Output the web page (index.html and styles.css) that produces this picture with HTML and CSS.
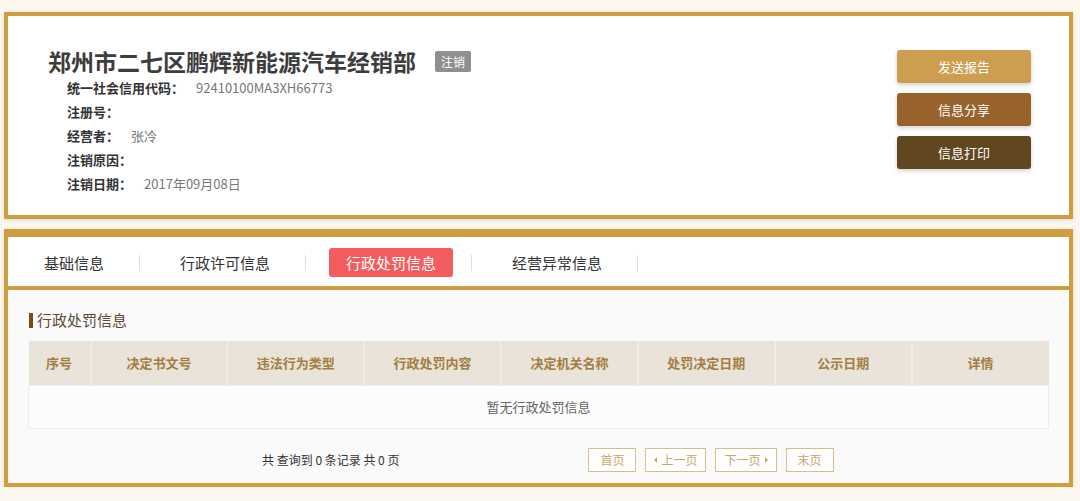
FILE: index.html
```
<!DOCTYPE html>
<html lang="zh-CN">
<head>
    <meta charset="UTF-8">
    <meta name="viewport" content="width=device-width, initial-scale=1.0">
    <title>郑州市二七区鹏辉新能源汽车经销部</title>
    <link rel="stylesheet" href="styles.css">
</head>
<body>
    <div class="page">
        <div class="card company-card">
            <div class="company-info">
                <h1 class="company-name">郑州市二七区鹏辉新能源汽车经销部 <span class="status-badge">注销</span></h1>
                <ul class="info-list">
                    <li><span class="info-label">统一社会信用代码：</span><span class="info-value">92410100MA3XH66773</span></li>
                    <li><span class="info-label">注册号：</span><span class="info-value"></span></li>
                    <li><span class="info-label">经营者：</span><span class="info-value">张冷</span></li>
                    <li><span class="info-label">注销原因：</span><span class="info-value"></span></li>
                    <li><span class="info-label">注销日期：</span><span class="info-value">2017年09月08日</span></li>
                </ul>
            </div>
            <div class="actions">
                <button class="btn btn-report">发送报告</button>
                <button class="btn btn-share">信息分享</button>
                <button class="btn btn-print">信息打印</button>
            </div>
        </div>

        <div class="card detail-card">
            <ul class="tabs">
                <li class="tab-item"><a href="#">基础信息</a></li>
                <li class="tab-item"><a href="#">行政许可信息</a></li>
                <li class="tab-item active"><a href="#">行政处罚信息</a></li>
                <li class="tab-item"><a href="#">经营异常信息</a></li>
            </ul>

            <div class="tab-content">
                <h2 class="section-title">行政处罚信息</h2>
                <table class="data-table">
                    <thead>
                        <tr>
                            <th class="col-no">序号</th>
                            <th>决定书文号</th>
                            <th>违法行为类型</th>
                            <th>行政处罚内容</th>
                            <th>决定机关名称</th>
                            <th>处罚决定日期</th>
                            <th>公示日期</th>
                            <th>详情</th>
                        </tr>
                    </thead>
                    <tbody>
                        <tr>
                            <td colspan="8" class="empty">暂无行政处罚信息</td>
                        </tr>
                    </tbody>
                </table>

                <div class="table-footer">
                    <span class="page-info">共 查询到 0 条记录 共 0 页</span>
                    <div class="pager">
                        <a href="#" class="page-btn">首页</a>
                        <a href="#" class="page-btn prev">上一页</a>
                        <a href="#" class="page-btn next">下一页</a>
                        <a href="#" class="page-btn">末页</a>
                    </div>
                </div>
            </div>
        </div>
    </div>
</body>
</html>
```
FILE: styles.css
```
:root {
    --gold: #cf9d3d;
    --gold-light: #d8bd88;
    --text-color: #3b3b3b;
    --text-secondary: #777777;
    --bg-color: #fcf8ef;
}

* {
    box-sizing: border-box;
    margin: 0;
    padding: 0;
}

body {
    font-family: "Noto Sans CJK SC", "Liberation Sans", sans-serif;
    color: var(--text-color);
    background-color: var(--bg-color);
}

ul {
    list-style: none;
}

a {
    text-decoration: none;
}

.page {
    padding: 12px 7px 0 4px;
    display: flex;
    flex-direction: column;
    gap: 10px;
}

.card {
    background-color: #ffffff;
    border: 4px solid var(--gold);
    box-shadow: 0 1px 5px rgba(0, 0, 0, 0.12);
}

/* company card */

.company-card {
    display: flex;
    justify-content: space-between;
    align-items: flex-start;
    padding: 31px 38px 19px 40px;
}

.company-name {
    display: flex;
    align-items: center;
    font-size: 23px;
    line-height: 29px;
    font-weight: bold;
    color: #3d3d3d;
}

.status-badge {
    margin-left: 19px;
    width: 36px;
    height: 21px;
    line-height: 21px;
    text-align: center;
    font-size: 12px;
    font-weight: normal;
    color: #ffffff;
    background-color: #8f8f8f;
    border-radius: 2px;
}

.info-list {
    padding-left: 19px;
}

.info-list li {
    font-size: 13px;
    line-height: 24px;
    height: 24px;
}

.info-label {
    font-weight: bold;
    color: #333333;
}

.info-value {
    margin-left: 12px;
    color: var(--text-secondary);
}

.actions {
    margin-top: 3px;
    display: flex;
    flex-direction: column;
    gap: 10px;
}

.btn {
    width: 134px;
    height: 33px;
    border: none;
    border-radius: 3px;
    font-family: inherit;
    font-size: 13px;
    color: #ffffff;
    cursor: pointer;
    box-shadow: 0 2px 4px rgba(0, 0, 0, 0.18);
}

.btn-report {
    background-color: #cd9e4f;
}

.btn-share {
    background-color: #98632a;
}

.btn-print {
    background-color: #614720;
}

/* detail card */

.detail-card {
    border-top-width: 8px;
}

.tabs {
    display: flex;
    align-items: center;
    height: 53px;
    padding-top: 2px;
    border-bottom: 4px solid var(--gold);
}

.tab-item {
    display: flex;
    align-items: center;
    padding-left: 19px;
}

.tab-item + .tab-item {
    padding-left: 23px;
}

.tab-item::after {
    content: "";
    width: 1px;
    height: 16px;
    margin-left: 18px;
    background-color: #dddddd;
}

.tab-item a {
    display: block;
    height: 29px;
    line-height: 29px;
    padding: 0 17px;
    font-size: 15px;
    color: #333333;
    border-radius: 3px;
}

.tab-item.active a {
    color: #ffffff;
    background-color: #f25c5f;
}

.tab-content {
    background-color: #fafafa;
    padding: 20px 20px 11px 20px;
}

.section-title {
    display: flex;
    align-items: center;
    gap: 4px;
    font-size: 15px;
    line-height: 20px;
    font-weight: normal;
    color: #5a4a38;
    margin-bottom: 11px;
}

.section-title::before {
    content: "";
    width: 4px;
    height: 15px;
    margin-left: 1px;
    background-color: #7b4c12;
}

.data-table {
    width: 100%;
    border-collapse: collapse;
    table-layout: fixed;
}

.data-table th {
    height: 44px;
    font-size: 13px;
    font-weight: bold;
    color: #a27e40;
    background-color: #e9e3d9;
    border-left: 2px solid #f1ece4;
}

.data-table th:first-child {
    border-left: none;
}

.data-table .col-no {
    width: 62px;
}

.data-table td {
    height: 43px;
    font-size: 13px;
    text-align: center;
    color: #666666;
    background-color: #fcfcfc;
    border: 1px solid #f0eeea;
}

.table-footer {
    display: flex;
    align-items: center;
    margin-top: 19px;
    padding-left: 234px;
}

.page-info {
    font-size: 12px;
    color: #333333;
}

.pager {
    display: flex;
    gap: 9px;
    margin-left: 189px;
}

.page-btn {
    display: flex;
    align-items: center;
    gap: 4px;
    height: 24px;
    padding: 0 11px;
    font-size: 12px;
    color: #caa666;
    background-color: #ffffff;
    border: 1px solid var(--gold-light);
}

.page-btn.prev,
.page-btn.next {
    padding: 0 8px;
}

.page-btn.prev::before,
.page-btn.next::after {
    content: "";
    width: 0;
    height: 0;
    border-top: 3px solid transparent;
    border-bottom: 3px solid transparent;
}

.page-btn.prev::before {
    border-right: 3px solid #caa666;
}

.page-btn.next::after {
    border-left: 3px solid #caa666;
}
```
